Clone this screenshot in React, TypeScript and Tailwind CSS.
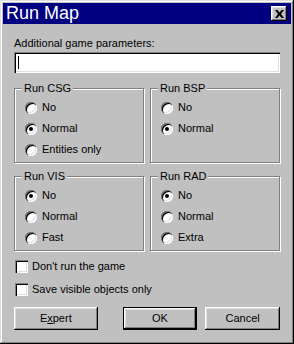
import React from 'react';

const font = { fontFamily: '"Liberation Sans", Arial, sans-serif' };

const Radio = ({ label, checked = false }: { label: string; checked?: boolean }) => (
  <div className="flex h-[21px] items-center">
    <div className="flex h-[12px] w-[12px] items-center justify-center rounded-full bg-white shadow-[inset_1px_1px_#808080,inset_2px_2px_#000,inset_-1px_-1px_#fff,inset_-2px_-2px_#dfdfdf]">
      {checked && <div className="h-[4px] w-[4px] rounded-full bg-black" />}
    </div>
    <span className="ml-[5px] text-[11px] leading-[13px] text-black">{label}</span>
  </div>
);

const Group = ({ title, options, selected }: { title: string; options: string[]; selected: number }) => (
  <div className="relative h-[75px] border border-[#808080] shadow-[1px_1px_0_#fff,inset_1px_1px_0_#fff]">
    <span className="absolute -top-[7px] left-[7px] bg-[#c0c0c0] px-[2px] text-[11px] leading-[13px] text-black">
      {title}
    </span>
    <div className="flex flex-col pl-[10px] pt-[8px]">
      {options.map((o, i) => (
        <Radio key={o} label={o} checked={i === selected} />
      ))}
    </div>
  </div>
);

const Checkbox = ({ label }: { label: string }) => (
  <div className="flex h-[23px] items-center">
    <div className="h-[13px] w-[13px] bg-white shadow-[inset_1px_1px_#808080,inset_2px_2px_#000,inset_-1px_-1px_#fff,inset_-2px_-2px_#dfdfdf]" />
    <span className="ml-[4px] text-[11px] leading-[13px] text-black">{label}</span>
  </div>
);

const btn =
  'flex h-[23px] items-center justify-center bg-[#c0c0c0] text-[11px] text-black shadow-[inset_-1px_-1px_#000,inset_1px_1px_#fff,inset_-2px_-2px_#808080,inset_2px_2px_#dfdfdf]';

export default function App() {
  return (
    <div
      style={font}
      className="flex h-[344px] w-[294px] flex-col bg-[#c0c0c0] p-[3px] shadow-[inset_-1px_-1px_#000,inset_1px_1px_#dfdfdf,inset_-2px_-2px_#808080,inset_2px_2px_#fff]"
    >
      {/* title bar */}
      <div className="flex h-[21px] items-center justify-between bg-[#000080] pl-[3px] pr-[4px]">
        <span className="text-[18px] leading-[21px] text-white">Run Map</span>
        <div className="flex h-[15px] w-[16px] items-center justify-center bg-[#c0c0c0] shadow-[inset_-1px_-1px_#000,inset_1px_1px_#fff,inset_-2px_-2px_#808080,inset_2px_2px_#dfdfdf]">
          <svg width="9" height="8" viewBox="0 0 9 8">
            <path d="M0 0h2.5l2 2.5 2-2.5H9L6 4l3 4H6.5l-2-2.5-2 2.5H0l3-4z" fill="#000" />
          </svg>
        </div>
      </div>

      <div className="flex flex-col px-[11px]">
        <span className="mt-[13px] text-[11px] leading-[13px] text-black">Additional game parameters:</span>
        <div className="mt-[2px] flex h-[21px] items-center bg-white pl-[4px] shadow-[inset_1px_1px_#808080,inset_2px_2px_#000,inset_-1px_-1px_#fff,inset_-2px_-2px_#dfdfdf]">
          <div className="h-[13px] w-[1px] bg-black" />
        </div>

        <div className="mt-[15px] grid grid-cols-2 gap-x-[6px] gap-y-[13px]">
          <Group title="Run CSG" options={['No', 'Normal', 'Entities only']} selected={1} />
          <Group title="Run BSP" options={['No', 'Normal']} selected={1} />
          <Group title="Run VIS" options={['No', 'Normal', 'Fast']} selected={0} />
          <Group title="Run RAD" options={['No', 'Normal', 'Extra']} selected={0} />
        </div>

        <div className="mt-[4px] flex flex-col pl-[1px]">
          <Checkbox label="Don't run the game" />
          <Checkbox label="Save visible objects only" />
        </div>

        <div className="mt-[6px] flex">
          <button className={`${btn} w-[84px]`}>
            E<span className="underline">x</span>pert
          </button>
          <button className="ml-[25px] flex h-[23px] w-[75px] items-center justify-center border border-black bg-[#c0c0c0] text-[11px] text-black shadow-[inset_-1px_-1px_#000,inset_1px_1px_#fff,inset_-2px_-2px_#808080,inset_2px_2px_#dfdfdf]">
            OK
          </button>
          <button className={`${btn} ml-[8px] w-[75px]`}>Cancel</button>
        </div>
      </div>
    </div>
  );
}
